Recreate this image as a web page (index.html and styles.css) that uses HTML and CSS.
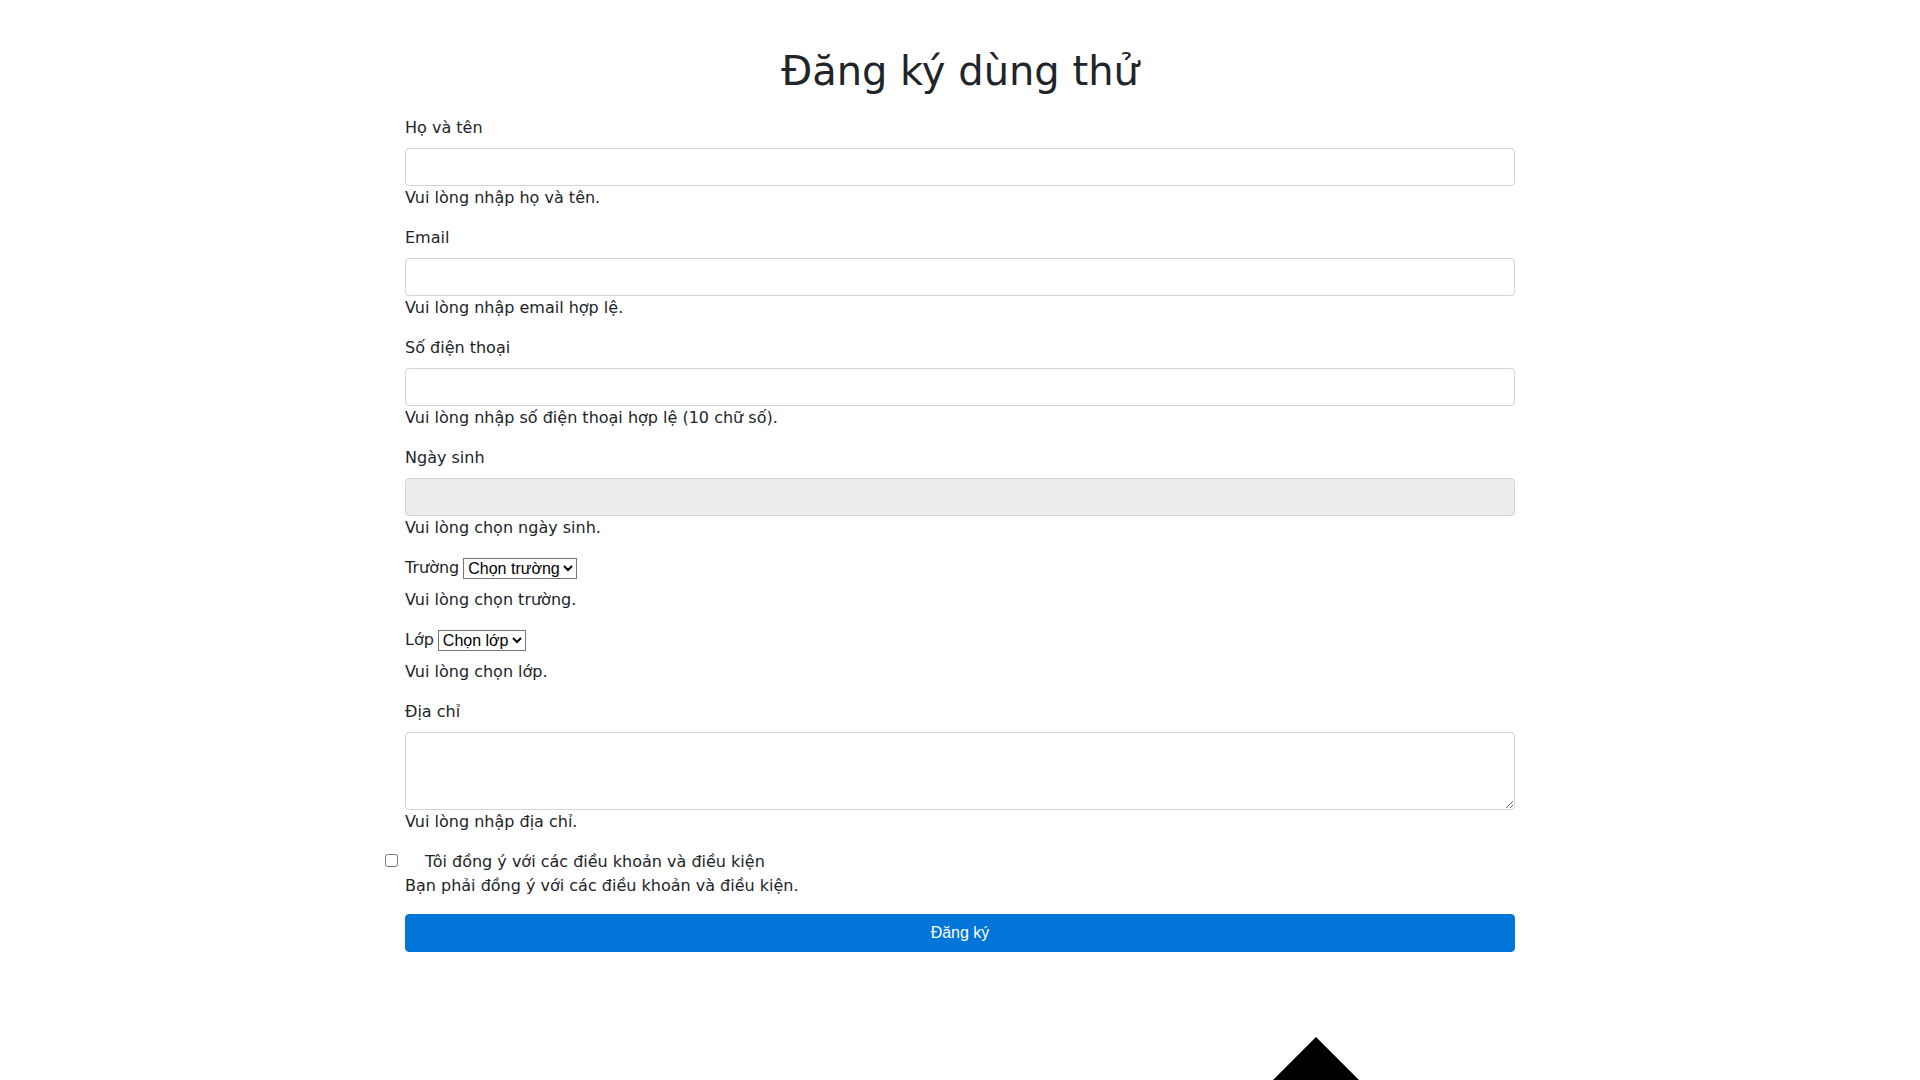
FILE: index.html
```html
<!DOCTYPE html>
<html lang="vi">
<head>
<meta charset="utf-8">
<title>Đăng ký dùng thử</title>
<link rel="stylesheet" href="styles.css">
</head>
<body>
<div class="container">
  <h1 class="title">Đăng ký dùng thử</h1>
  <form class="form">
    <div class="group">
      <label class="label">Họ và tên</label>
      <input class="control" type="text">
      <div class="feedback">Vui lòng nhập họ và tên.</div>
    </div>
    <div class="group">
      <label class="label">Email</label>
      <input class="control" type="text">
      <div class="feedback">Vui lòng nhập email hợp lệ.</div>
    </div>
    <div class="group">
      <label class="label">Số điện thoại</label>
      <input class="control" type="text">
      <div class="feedback">Vui lòng nhập số điện thoại hợp lệ (10 chữ số).</div>
    </div>
    <div class="group">
      <label class="label">Ngày sinh</label>
      <input class="control readonly" type="text" readonly>
      <div class="feedback">Vui lòng chọn ngày sinh.</div>
    </div>
    <div class="group">
      <div class="inline-row">
        <label class="inline-label">Trường</label>
        <select class="native-select"><option>Chọn trường</option></select>
      </div>
      <div class="feedback">Vui lòng chọn trường.</div>
    </div>
    <div class="group">
      <div class="inline-row">
        <label class="inline-label">Lớp</label>
        <select class="native-select"><option>Chọn lớp</option></select>
      </div>
      <div class="feedback">Vui lòng chọn lớp.</div>
    </div>
    <div class="group">
      <label class="label">Địa chỉ</label>
      <textarea class="control area"></textarea>
      <div class="feedback">Vui lòng nhập địa chỉ.</div>
    </div>
    <div class="group">
      <div class="check-row">
        <input class="check" type="checkbox">
        <label class="check-label">Tôi đồng ý với các điều khoản và điều kiện</label>
      </div>
      <div class="feedback">Bạn phải đồng ý với các điều khoản và điều kiện.</div>
    </div>
    <button class="submit" type="button">Đăng ký</button>
  </form>
</div>
<div class="corner-triangle"></div>
</body>
</html>
```
FILE: styles.css
```css
html, body {
  margin: 0;
  padding: 0;
  background: #ffffff;
}
body {
  font-family: "DejaVu Sans", sans-serif;
  font-size: 16px;
  line-height: 1.5;
  color: #212529;
}
.container {
  width: 1110px;
  margin: 0 auto;
}
.title {
  margin: 47px 0 21px;
  font-size: 40px;
  line-height: 48px;
  font-weight: 400;
  text-align: center;
  color: #212529;
}
.form {
  display: flex;
  flex-direction: column;
}
.group {
  display: flex;
  flex-direction: column;
  margin-bottom: 16px;
}
.label {
  display: block;
  margin-bottom: 8px;
}
.control {
  box-sizing: border-box;
  display: block;
  width: 100%;
  height: 38px;
  margin: 0;
  padding: 6px 12px;
  font-family: "DejaVu Sans", sans-serif;
  font-size: 16px;
  line-height: 1.5;
  color: #495057;
  background: #ffffff;
  border: 1px solid #ced4da;
  border-radius: 4px;
  outline: none;
}
.readonly {
  background: #eceded;
}
.area {
  height: 78px;
  resize: vertical;
}
.feedback {
  line-height: 24px;
}
.inline-row {
  display: flex;
  align-items: center;
  height: 24px;
  margin-bottom: 8px;
}
.inline-label {
  margin-right: 4px;
}
.native-select {
  font-family: "Liberation Sans", Arial, sans-serif;
  font-size: 16px;
  padding: 0;
  margin: 1px 0 0;
  color: #000000;
  background: #ffffff;
}
.check-row {
  display: flex;
  align-items: center;
  height: 24px;
  margin-left: -20px;
}
.check {
  width: 13px;
  height: 13px;
  margin: -3px 27px 0 0;
}
.check-label {
  line-height: 24px;
}
.submit {
  box-sizing: border-box;
  width: 100%;
  height: 38px;
  padding: 6px 12px;
  font-family: "Liberation Sans", Arial, sans-serif;
  font-size: 16px;
  line-height: 24px;
  color: #ffffff;
  background: #0275d8;
  border: 1px solid #0275d8;
  border-radius: 4px;
}
.corner-triangle {
  position: fixed;
  left: 1236px;
  top: 1037px;
  width: 0;
  height: 0;
  border-left: 80px solid transparent;
  border-right: 80px solid transparent;
  border-bottom: 80px solid #000000;
}
```
